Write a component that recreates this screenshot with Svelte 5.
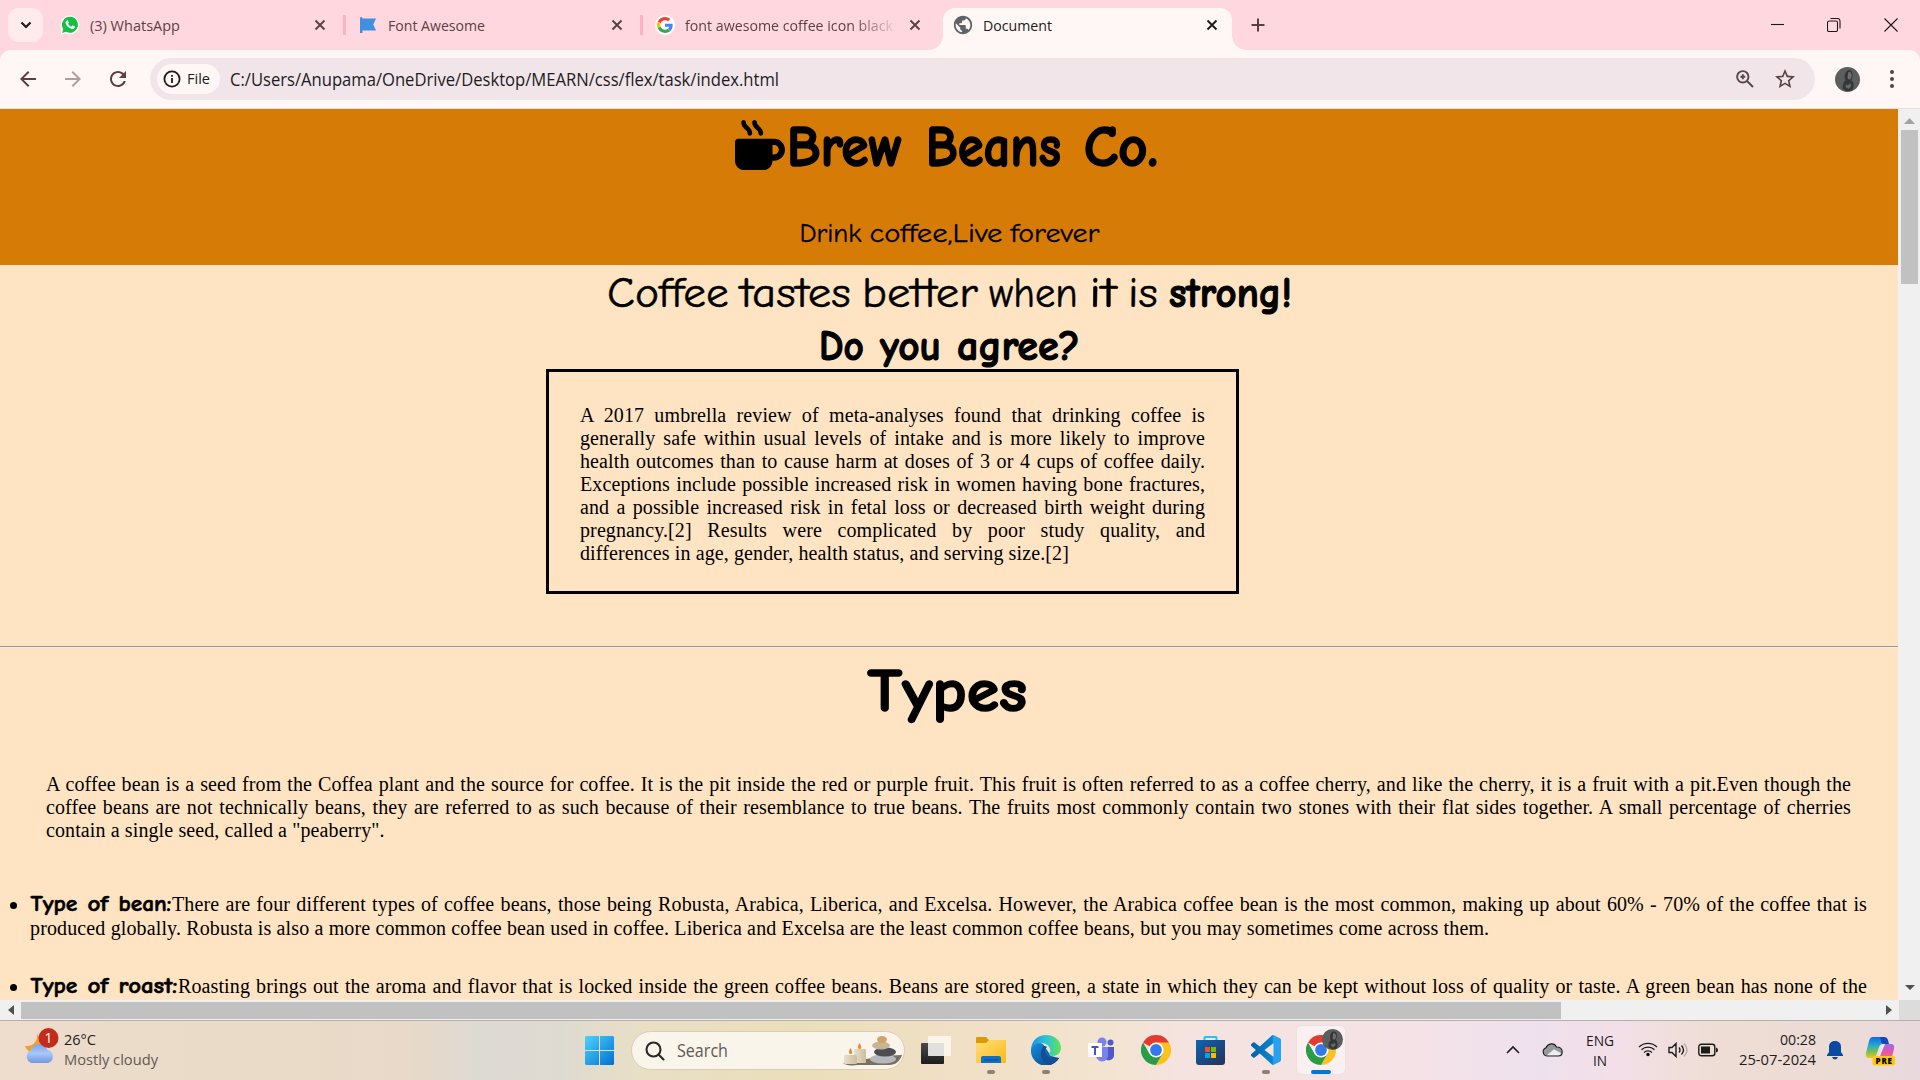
<script>
  const tabs = [
    { id: 'whatsapp', title: '(3) WhatsApp', width: 90 },
    { id: 'flag', title: 'Font Awesome', width: 97 },
    { id: 'google', title: 'font awesome coffee icon black', width: 208 },
    { id: 'globe', title: 'Document', width: 69 }
  ];
  const fact = [
    'A 2017 umbrella review of meta-analyses found that drinking coffee is',
    'generally safe within usual levels of intake and is more likely to improve',
    'health outcomes than to cause harm at doses of 3 or 4 cups of coffee daily.',
    'Exceptions include possible increased risk in women having bone fractures,',
    'and a possible increased risk in fetal loss or decreased birth weight during',
    'pregnancy.[2] Results were complicated by poor study quality, and',
    'differences in age, gender, health status, and serving size.[2]'
  ];
  const intro = [
    'A coffee bean is a seed from the Coffea plant and the source for coffee. It is the pit inside the red or purple fruit. This fruit is often referred to as a coffee cherry, and like the cherry, it is a fruit with a pit.Even though the',
    'coffee beans are not technically beans, they are referred to as such because of their resemblance to true beans. The fruits most commonly contain two stones with their flat sides together. A small percentage of cherries',
    'contain a single seed, called a "peaberry".'
  ];
</script>

{#snippet label(text, width, size, kind = '')}
  <svg class="label {kind}" {width} height={Math.round(size * 1.35)}>
    <text x="0" y={size} font-size={size} textLength={width} lengthAdjust="spacingAndGlyphs">{text}</text>
  </svg>
{/snippet}

{#snippet comic(text, width, size, bold = false)}
  <svg class="label comic" class:bold {width} height={Math.round(size * 1.35)}>
    <text x={-size * 0.025} y={size * 1.02} font-size={size * 1.07} stroke-width={size * (bold ? 0.028 : 0.012)} textLength={width + size * 0.045} lengthAdjust="spacingAndGlyphs">{text}</text>
  </svg>
{/snippet}

{#snippet cross()}
  <svg class="cross" width="16" height="16" viewBox="0 0 16 16"><path d="M3.500 3.500l9 9M12.500 3.500l-9 9" /></svg>
{/snippet}

{#snippet favicon(id)}
  {#if id === 'whatsapp'}
    <svg width="20" height="20" viewBox="0 0 20 20">
      <path d="M10 .6a9.300 9.300 0 1 1-4.300 17.600L.7 19.400l1.200-4.800A9.300 9.300 0 0 1 10 .6z" fill="#fff" />
      <path d="M10.100 1.800a8 8 0 1 1-4 15l-3.900 1.100 1-3.800a8 8 0 0 1 6.900-12.300z" fill="#12c143" />
      <path d="M7.200 5.400c.5-.1.8 0 1 .5l.6 1.500c.1.300 0 .5-.7 1.400.7 1.400 1.800 2.300 3.100 2.900l1-1.100c.2-.2.4-.2.7-.1l1.700.8c.4.2.3.9.1 1.400-.5 1-1.700 1.400-2.800 1.200-3.100-.8-5.600-3.100-6.300-5.600-.3-1.200.4-2.700 1.600-2.900z" fill="#fff" />
    </svg>
  {:else if id === 'flag'}
    <svg width="20" height="20" viewBox="0 0 20 20"><path d="M2.500 2c1.400 0 2 .7 2 1.500h13.500l-2.700 5.900 2.700 6.100H4.500V18h-2.500V3.500z" fill="#418fde" /></svg>
  {:else if id === 'google'}
    <svg width="20" height="20" viewBox="0 0 48 48">
      <circle cx="24" cy="24" r="24" fill="#fff" />
      <g transform="translate(4.800 4.800) scale(.8)">
        <path fill="#ea4335" d="M24 9.500c3.540 0 6.710 1.220 9.210 3.600l6.850-6.850C35.900 2.380 30.470 0 24 0 14.620 0 6.510 5.380 2.560 13.220l7.980 6.190C12.430 13.720 17.740 9.500 24 9.500z" />
        <path fill="#4285f4" d="M46.980 24.550c0-1.570-.15-3.090-.38-4.550H24v9.020h12.940c-.58 2.960-2.260 5.480-4.780 7.180l7.730 6c4.510-4.180 7.090-10.360 7.090-17.650z" />
        <path fill="#fbbc05" d="M10.530 28.590c-.48-1.450-.76-2.990-.76-4.590s.27-3.140.76-4.590l-7.980-6.190C.92 16.460 0 20.120 0 24c0 3.880.92 7.540 2.560 10.780l7.970-6.190z" />
        <path fill="#34a853" d="M24 48c6.480 0 11.930-2.130 15.890-5.810l-7.730-6c-2.150 1.450-4.920 2.300-8.160 2.300-6.260 0-11.570-4.220-13.470-9.910l-7.980 6.190C6.510 42.620 14.620 48 24 48z" />
      </g>
    </svg>
  {:else}
    <svg width="22" height="22" viewBox="0 0 24 24">
      <path fill="#5f6368" d="M12 2C6.480 2 2 6.480 2 12s4.480 10 10 10 10-4.480 10-10S17.520 2 12 2zm-1 17.930c-3.950-.49-7-3.850-7-7.930 0-.62.08-1.210.21-1.790L9 15v1c0 1.100.9 2 2 2v1.930zm6.900-2.540c-.26-.81-1-1.390-1.900-1.390h-1v-3c0-.55-.45-1-1-1H8v-2h2c.55 0 1-.45 1-1V7h2c1.100 0 2-.9 2-2v-.41c2.930 1.190 5 4.060 5 7.410 0 2.080-.8 3.970-2.100 5.390z" />
    </svg>
  {/if}
{/snippet}

{#snippet chrome()}
  <svg width="30" height="30" viewBox="0 0 30 30">
    <path d="M15 15L2 7.500A15 15 0 0 1 28 7.500z" fill="#e33b2e" />
    <path d="M28 7.500H15l6.500 11.200L15 30A15 15 0 0 0 28 7.500z" fill="#fcc31e" />
    <path d="M2 7.500A15 15 0 0 0 15 30l6.500-11.200L15 15 8.500 18.800z" fill="#2a9b47" />
    <circle cx="15" cy="15" r="7.500" fill="#fff" />
    <circle cx="15" cy="15" r="5.900" fill="#3479ea" />
  </svg>
{/snippet}

{#snippet avatar(size)}
  <svg class="avatar" width={size} height={size} viewBox="0 0 26 26">
    <circle cx="13" cy="13" r="13" fill="#5b5e5e" />
    <path d="M8 22c0-4 1-7 3-8-2-4-1-9 3-11 4 0 5 4 4 8l-1 3c3 2 3 6 1 10-3 2-8 1-10-2z" fill="#343636" />
    <path d="M14 5c3 0 4 3 3 6-1 3-4 2-4 0z" fill="#716d6b" />
    <path d="M11 18l2 1 3-2 1 3-3 3-3-2z" fill="#646767" />
  </svg>
{/snippet}

<div class="screen">
  <header class="tabstrip">
    <div class="tab-search"><svg width="14" height="14" viewBox="0 0 14 14"><path d="M2.500 4.500L7 9l4.500-4.500" /></svg></div>
    {#each tabs as tab}
      <div class="tab {tab.id}">
        <div class="fav">{@render favicon(tab.id)}</div>
        {@render label(tab.title, tab.width, 15)}
        {@render cross()}
      </div>
    {/each}
    <svg class="plus" width="18" height="18" viewBox="0 0 18 18"><path d="M9 2.500v13M2.500 9h13" /></svg>
    <div class="window-controls">
      <svg width="14" height="14" viewBox="0 0 14 14"><path d="M1 6.500h13" /></svg>
      <svg width="14" height="14" viewBox="0 0 14 14"><path d="M2.500 3h6.500q1.500 0 1.500 1.500V12q0 1.500-1.500 1.500H2Q.5 13.500.5 12V4.500Q.5 3 2.500 3zM3.500.5h7q2.500 0 2.500 2.500v7.500" /></svg>
      <svg width="14" height="14" viewBox="0 0 14 14"><path d="M.5.5l13 13M13.500.5l-13 13" /></svg>
    </div>
  </header>

  <div class="toolbar-back">
    <nav class="toolbar">
      <svg class="tool back" width="24" height="24" viewBox="0 0 24 24"><path d="M20 11H7.830l5.590-5.590L12 4l-8 8 8 8 1.410-1.410L7.830 13H20z" /></svg>
      <svg class="tool forward" width="24" height="24" viewBox="0 0 24 24"><path d="M4 11h12.170l-5.590-5.590L12 4l8 8-8 8-1.410-1.410L16.170 13H4z" /></svg>
      <svg class="tool reload" width="24" height="24" viewBox="0 0 24 24"><path d="M17.650 6.350C16.200 4.900 14.210 4 12 4c-4.420 0-7.990 3.580-7.990 8s3.570 8 7.990 8c3.730 0 6.840-2.550 7.730-6h-2.080c-.82 2.330-3.040 4-5.650 4-3.310 0-6-2.690-6-6s2.690-6 6-6c1.660 0 3.140.69 4.220 1.780L13 11h7V4z" /></svg>
      <div class="omnibox">
        <div class="chip">
          <svg width="18" height="18" viewBox="0 0 18 18"><circle cx="9" cy="9" r="7.600" fill="none" stroke="#201a1b" stroke-width="1.800" /><path d="M8.100 8h1.800v5H8.100zM8.100 5h1.800v1.800H8.100z" fill="#201a1b" /></svg>
          {@render label('File', 23, 15, 'dark')}
        </div>
        {@render label('C:/Users/Anupama/OneDrive/Desktop/MEARN/css/flex/task/index.html', 549, 17.5, 'dark url')}
        <svg class="zoom" width="20" height="20" viewBox="0 0 20 20"><circle cx="7.800" cy="7.800" r="5.700" /><path d="M12 12l6 6M7.800 5.300v5M5.300 7.800h5" /></svg>
        <svg class="tool star" width="24" height="24" viewBox="0 0 24 24"><path d="M22 9.240l-7.190-.62L12 2 9.190 8.630 2 9.240l5.460 4.730L5.820 21 12 17.270 18.180 21l-1.630-7.030L22 9.240zM12 15.400l-3.760 2.270 1-4.280-3.320-2.880 4.380-.38L12 6.100l1.710 4.040 4.380.38-3.320 2.880 1 4.280L12 15.400z" /></svg>
      </div>
      {@render avatar(25)}
      <svg class="dots" width="6" height="20" viewBox="0 0 6 20"><circle cx="3" cy="3" r="2" /><circle cx="3" cy="10" r="2" /><circle cx="3" cy="17" r="2" /></svg>
    </nav>
  </div>

  <div class="viewport">
    <main>
      <section class="hero">
        <div class="brand">
          <svg class="mug" width="50" height="50" viewBox="0 0 512 512"><path d="M88 0C74.700 0 64 10.700 64 24c0 38.900 23.400 59.400 39.100 73.100l1.100 1C120.500 112.300 128 119.900 128 136c0 13.300 10.700 24 24 24s24-10.700 24-24c0-38.900-23.400-59.400-39.100-73.100l-1.100-1C119.500 47.700 112 40.100 112 24c0-13.300-10.700-24-24-24zM32 192c-17.700 0-32 14.300-32 32V416c0 53 43 96 96 96H288c53 0 96-43 96-96h16c61.900 0 112-50.100 112-112s-50.100-112-112-112H352 32zm352 64h16c26.500 0 48 21.500 48 48s-21.500 48-48 48H384V256zM224 24c0-13.300-10.700-24-24-24s-24 10.700-24 24c0 38.900 23.400 59.400 39.100 73.100l1.100 1C232.500 112.300 240 119.900 240 136c0 13.300 10.700 24 24 24s24-10.700 24-24c0-38.900-23.400-59.400-39.100-73.100l-1.100-1C231.500 47.700 224 40.100 224 24z" /></svg>
          {@render comic('Brew', 114, 54, true)}
          {@render comic('Beans', 133, 54, true)}
          {@render comic('Co.', 72, 54, true)}
        </div>
        <div class="tagline">
          {@render comic('Drink', 61, 25)}
          {@render comic('coffee,Live', 132, 25)}
          {@render comic('forever', 88, 25)}
        </div>
      </section>

      <div class="slogan">
        {@render comic('Coffee', 120, 40)}
        {@render comic('tastes', 109, 40)}
        {@render comic('better', 114, 40)}
        {@render comic('when', 87, 40)}
        {@render comic('it', 26, 40)}
        {@render comic('is', 28, 40)}
        {@render comic('strong!', 121, 40, true)}
      </div>
      <div class="question">
        {@render comic('Do', 43, 40, true)}
        {@render comic('you', 59, 40, true)}
        {@render comic('agree?', 121, 40, true)}
      </div>

      <div class="fact">
        {#each fact as line}<p class="line">{line}</p>{/each}
      </div>
      <div class="rule"></div>
      <div class="types">{@render comic('Types', 157, 57, true)}</div>
      <div class="intro">
        {#each intro as line}<p class="line">{line}</p>{/each}
      </div>

      <ul>
        <li>
          <div class="lead">
            <i></i>
            <div class="term">{@render comic('Type', 46, 21, true)}{@render comic('of', 20, 21, true)}{@render comic('bean:', 52, 21, true)}</div>
            <p class="line">There are four different types of coffee beans, those being Robusta, Arabica, Liberica, and Excelsa. However, the Arabica coffee bean is the most common, making up about 60% - 70% of the coffee that is</p>
          </div>
          <p class="line last">produced globally. Robusta is also a more common coffee bean used in coffee. Liberica and Excelsa are the least common coffee beans, but you may sometimes come across them.</p>
        </li>
        <li>
          <div class="lead">
            <i></i>
            <div class="term">{@render comic('Type', 46, 21, true)}{@render comic('of', 20, 21, true)}{@render comic('roast:', 58, 21, true)}</div>
            <p class="line">Roasting brings out the aroma and flavor that is locked inside the green coffee beans. Beans are stored green, a state in which they can be kept without loss of quality or taste. A green bean has none of the</p>
          </div>
        </li>
      </ul>
    </main>
    <div class="vbar">
      <svg width="11" height="6" viewBox="0 0 11 6"><path d="M5.500 0L11 6H0z" fill="#a3a3a3" /></svg>
      <div class="vthumb"></div>
      <svg width="10" height="5" viewBox="0 0 10 5"><path d="M0 0h10L5 5z" fill="#505050" /></svg>
    </div>
  </div>
  <div class="hbar">
    <svg width="6" height="10" viewBox="0 0 6 10"><path d="M6 0v10L0 5z" /></svg>
    <div class="hthumb"></div>
    <svg width="6" height="10" viewBox="0 0 6 10"><path d="M0 0v10l6-5z" /></svg>
    <div class="corner"></div>
  </div>

  <footer>
    <svg class="weather" width="36" height="36" viewBox="0 0 36 36">
      <defs>
        <linearGradient id="cloud" x2="0" y2="1"><stop stop-color="#7da2e6" /><stop offset=".5" stop-color="#a9c8f8" /><stop offset="1" stop-color="#6f98e0" /></linearGradient>
      </defs>
      <path d="M13 4c1 7-4 13-12 12 2 6 8 8 14 6l5-9z" fill="#f0a02c" />
      <path d="M7.500 33a7 7 0 0 1-.5-13c1-4 5-6.500 9-6 4 .3 6.500 3 7.500 6a6.700 6.700 0 0 1 .5 13z" fill="url(#cloud)" />
      <circle cx="24.500" cy="8" r="10" fill="#c42b1c" />
      <text class="ui" x="20.500" y="13" font-size="14" fill="#fff">1</text>
    </svg>
    <div class="forecast">
      {@render label('26°C', 32, 15, 'dark')}
      {@render label('Mostly cloudy', 94, 15, 'muted')}
    </div>

    <svg class="windows" width="29" height="29" viewBox="0 0 29 29">
      <defs><linearGradient id="win" gradientUnits="userSpaceOnUse" x1="0" y1="0" x2="29" y2="29"><stop stop-color="#4fd2fb" /><stop offset="1" stop-color="#0070d2" /></linearGradient></defs>
      <path d="M1 0h13v14H0V1zM15 0h13l1 1v13H15zM0 15h14v14H1l-1-1zM15 15h14v13l-1 1H15z" fill="url(#win)" />
    </svg>

    <div class="search">
      <svg class="lens" width="20" height="20" viewBox="0 0 20 20"><circle cx="8.500" cy="8.500" r="7" /><path d="M13.500 13.500l5 5" /></svg>
      {@render label('Search', 51, 17.5, 'muted')}
      <svg class="spa" width="60" height="32" viewBox="0 0 60 32">
        <defs><linearGradient id="wax"><stop stop-color="#e9e0cb" /><stop offset="1" stop-color="#cbbf9f" /></linearGradient></defs>
        <path d="M0 28c16-4 30-4 36-7l23-1c-2 6-6 10-13 10H15C7 31 2 30 0 28z" fill="#77715e" />
        <rect x="11" y="14" width="12" height="14" rx="1" fill="url(#wax)" />
        <rect x="1" y="20" width="13" height="9" rx="1" fill="url(#wax)" />
        <path d="M16.500 8c2.500 4 2 6 0 6s-2-3 0-6zM7.500 13c2.500 4 2 6 0 6s-2-3 0-6z" fill="#ee8535" />
        <ellipse cx="40" cy="24" rx="13" ry="4.500" fill="#b7b8bd" />
        <ellipse cx="42" cy="17" rx="11" ry="4.500" fill="#4c4d53" />
        <ellipse cx="38" cy="10.500" rx="9" ry="4" fill="#c6b594" />
        <ellipse cx="39" cy="4.500" rx="5" ry="3.500" fill="#d5a168" />
      </svg>
    </div>

    <div class="apps">
      <div class="app">
        <svg width="30" height="30" viewBox="0 0 30 30">
          <defs><linearGradient id="tv" x2="0" y2="1"><stop stop-color="#4a4a4a" /><stop offset="1" stop-color="#1d1d1d" /></linearGradient></defs>
          <rect y="8" width="23" height="21" rx="1" fill="url(#tv)" /><path d="M7 8h16v13H7z" fill="#a6a6a4" /><rect x="7" y="1" width="23" height="20" rx="1" fill="#fff" fill-opacity=".65" />
        </svg>
      </div>
      <div class="app run">
        <svg width="30" height="30" viewBox="0 0 30 30">
          <defs><linearGradient id="fold" x2="1" y2="1"><stop stop-color="#ffe07a" /><stop offset="1" stop-color="#fdb813" /></linearGradient></defs>
          <path d="M0 3q0-1 1-1h9l3 3h16q1 0 1 1v4H0z" fill="#dc9b06" /><path d="M0 8h10l3-3h17v22q0 1-1 1H1q-1 0-1-1z" fill="url(#fold)" />
          <path d="M5 28v-5q0-2 2-2h16q2 0 2 2v5z" fill="#0f70c5" /><path d="M8 25h14" stroke="#0a4b8b" />
        </svg>
      </div>
      <div class="app run">
        <svg width="30" height="30" viewBox="0 0 30 30">
          <defs>
            <linearGradient id="e1"><stop stop-color="#1f8fe0" /><stop offset=".5" stop-color="#2bc4d8" /><stop offset="1" stop-color="#63e34f" /></linearGradient>
            <linearGradient id="e2" x2="1" y2="1"><stop stop-color="#1690df" /><stop offset="1" stop-color="#0b3f83" /></linearGradient>
          </defs>
          <path d="M0 14C2 8 8 7 12 9l8 12 8 2A15 15 0 0 1 0 14z" fill="url(#e2)" />
          <path d="M0 14C1 5 7 0 15 0c9 0 15 6 15 13 0 5-4 8-8 8-3 0-4-1-4-2s2-2 1-5c-1-4-5-6-9-6-5 0-9 3-10 6z" fill="url(#e1)" />
          <path d="M13 11c-6 6-3 17 6 18.500 4-1 7-3 9.500-7C22 26 14 22 14 16c0-2 1-3 2-4-1-1-2-1-3-1z" fill="#124f98" />
        </svg>
      </div>
      <div class="app">
        <svg width="30" height="30" viewBox="0 0 30 30">
          <circle cx="16" cy="7" r="4.500" fill="#7b83eb" /><circle cx="24.500" cy="7.500" r="3" fill="#5059c9" />
          <path d="M19 12h9v9a5.500 5.500 0 0 1-9 3z" fill="#5059c9" /><path d="M10 12h12v8a6 6 0 0 1-12 1z" fill="#7b83eb" />
          <rect x="2" y="8" width="14" height="14" fill="#fff" /><path d="M5.500 11h7v2H10v7H8v-7H5.500z" fill="#4b53bc" />
        </svg>
      </div>
      <div class="app">{@render chrome()}</div>
      <div class="app">
        <svg width="30" height="30" viewBox="0 0 30 30">
          <defs><linearGradient id="store" x2="1" y2="1"><stop stop-color="#0b66b4" /><stop offset="1" stop-color="#273154" /></linearGradient></defs>
          <path d="M8.500 6V2.500Q8.500 2 9 2h11q.5 0 .5.500V6" fill="none" stroke="#23c4f3" stroke-width="2" />
          <path d="M0 5h29v22q0 3-3 3H3q-3 0-3-3z" fill="url(#store)" />
          <path d="M9 12h5v5H9z" fill="#f25022" /><path d="M15 12h5v5h-5z" fill="#7fba00" /><path d="M9 18h5v5H9z" fill="#00a4ef" /><path d="M15 18h5v5h-5z" fill="#ffb900" />
        </svg>
      </div>
      <div class="app run">
        <svg width="30" height="30" viewBox="0 0 24 24">
          <defs><linearGradient id="vs"><stop stop-color="#0065a9" /><stop offset=".7" stop-color="#0b83ce" /><stop offset=".76" stop-color="#26a2f0" /></linearGradient></defs>
          <path fill="url(#vs)" d="M23.150 2.587L18.210.21a1.494 1.494 0 0 0-1.705.29l-9.460 8.630-4.120-3.128a.999.999 0 0 0-1.276.057L.327 7.261A1 1 0 0 0 .326 8.740L3.899 12 .326 15.260a1 1 0 0 0 .001 1.479L1.650 17.940a.999.999 0 0 0 1.276.057l4.120-3.128 9.460 8.630a1.492 1.492 0 0 0 1.704.29l4.942-2.377A1.500 1.500 0 0 0 24 20.060V3.939a1.500 1.500 0 0 0-.85-1.352zm-5.146 14.861L10.826 12l7.178-5.448v10.896z" />
        </svg>
      </div>
      <div class="app active">
        {@render chrome()}
        <div class="badge">{@render avatar(21)}</div>
      </div>
    </div>

    <svg class="chev" width="14" height="9" viewBox="0 0 14 9"><path d="M1 8l6-6 6 6" /></svg>
    <svg class="onedrive" width="21" height="15" viewBox="0 0 21 15">
      <path d="M5 14a4.300 4.300 0 0 1-1-8.300C6 1.500 12 0 14.500 5c4 0 5.700 2.500 5.700 5s-1.700 4-4 4z" fill="#999" stroke="#222" stroke-width="1.200" />
      <path d="M5 13.200l7-6 7 4c0 1-1 2-3 2z" fill="#eee" />
    </svg>
    <div class="lang">{@render label('ENG', 28, 14.5, 'dark')}{@render label('IN', 14, 14.5, 'dark')}</div>
    <svg class="wifi" width="20" height="16" viewBox="0 0 20 16"><path d="M1 6a13 13 0 0 1 18 0M3.500 8.800a9.300 9.300 0 0 1 13 0M6 11.500a5.700 5.700 0 0 1 8 0" /><circle cx="10" cy="13.500" r="1.700" /></svg>
    <svg class="sound" width="21" height="16" viewBox="0 0 21 16"><path d="M1 5.500h3l4-4v13l-4-4H1zM11 5.500q2 2.500 0 5M13.500 3.500q4 4.500 0 9" /><path class="faint" d="M16 1.500q6 6.500 0 13" /></svg>
    <svg class="battery" width="21" height="14" viewBox="0 0 21 14"><rect x=".8" y="1.300" width="16" height="11.500" rx="2.500" fill="none" stroke="#1c1c1c" stroke-width="1.400" /><path d="M3 3.500h9v7H3zM18 4.500q2 .5 2 2.500t-2 2.500z" fill="#1c1c1c" /></svg>
    <div class="clock">{@render label('00:28', 36, 15, 'dark')}{@render label('25-07-2024', 77, 15, 'dark')}</div>
    <svg class="bell" width="16" height="20" viewBox="0 0 16 20"><path d="M8 1c4 0 6 2.500 6 6v5l2 3v1H0v-1l2-3V7c0-3.500 2-6 6-6zM5 17h6q-1 2.500-3 2.500T5 17z" fill="#0b4aa2" /></svg>
    <svg class="copilot" width="31" height="31" viewBox="0 0 31 31">
      <defs>
        <linearGradient id="c1" x2="0" y2="1"><stop stop-color="#1469e0" /><stop offset=".4" stop-color="#24a9d5" /><stop offset=".7" stop-color="#7abf48" /><stop offset="1" stop-color="#edc52b" /></linearGradient>
        <linearGradient id="c2" x2="0" y2="1"><stop stop-color="#9b6bf0" /><stop offset=".5" stop-color="#e755a8" /><stop offset="1" stop-color="#f7834a" /></linearGradient>
      </defs>
      <path d="M8 1h10q3 0 4 3l1 4h-5q-3 0-4 3l-3 9q-1 2-4 2H4q-4 0-3-5L4 5q1-4 4-4z" fill="url(#c1)" />
      <path d="M15 1h4q3 0 4 3l1 4h-5q-3 0-3-3z" fill="#1647b8" />
      <path d="M18 8h8q4 0 3 5l-2 8q-1 3-4 3H11q3-1 4-4l2-7z" fill="url(#c2)" />
      <path d="M18 8h2l-5 12q-1 2-4 2 2-1 3-4l2-7q.5-2 2-3z" fill="#f4e9ee" />
      <rect x="7.500" y="20" width="22.500" height="9.500" rx="2" fill="#ffc80a" />
      <text class="ui pre" x="10.500" y="27.700" font-size="8" textLength="16.500">PRE</text>
    </svg>
  </footer>
</div>

<style>
  :global(body) { margin: 0; overflow: hidden; }
  svg { display: block; flex: none; }
  p, ul { margin: 0; padding: 0; }
  .screen { width: 1920px; height: 1080px; display: flex; flex-direction: column; overflow: hidden; background: #ffe4c4; }
  .label { overflow: visible; font-family: 'Segoe UI', 'Open Sans', 'Noto Sans', sans-serif; fill: #5c3f43; }
  .label.dark { fill: #211c1d; }
  .label.muted { fill: #5f5a54; }
  .label.comic { font-family: 'Comic Sans MS', 'Comic Neue', 'Open Sans', sans-serif; fill: #000; stroke: #000; }
  .label.comic text { font-variant-ligatures: none; font-feature-settings: 'liga' 0, 'clig' 0, 'dlig' 0, 'calt' 0; }
  .label.bold { font-weight: 700; }
  .ui { font-family: 'Segoe UI', 'Open Sans', sans-serif; }

  .tabstrip { height: 50px; flex: none; display: flex; background: #ffd8df; }
  .tab-search { width: 35px; height: 34px; margin: 8px 17px 0 8px; border-radius: 11px; background: #ffebee; display: flex; align-items: center; justify-content: center; }
  .tab-search path { fill: none; stroke: #201a1b; stroke-width: 2.2; }
  .tab { box-sizing: border-box; height: 42px; margin-top: 8px; padding-bottom: 8px; display: flex; align-items: center; }
  .fav { width: 20px; margin-right: 10px; display: flex; justify-content: center; flex: none; }
  .tab .label { margin-top: 2px; }
  .tab .cross { margin-left: auto; }
  .cross path { fill: none; stroke: #5c3f43; stroke-width: 1.9; }
  .whatsapp { width: 283px; padding-right: 15px; }
  .flag, .google { background: linear-gradient(#ffb1c3, #ffb1c3) 0 7px / 3px 20px no-repeat; padding-left: 15px; }
  .flag { width: 297px; padding-right: 15px; }
  .google { width: 303px; padding-right: 20px; }
  .google .label { -webkit-mask-image: linear-gradient(90deg, #000 80%, transparent 103%); mask-image: linear-gradient(90deg, #000 80%, transparent 103%); }
  .globe { position: relative; width: 289px; padding: 0 12px 8px 10px; background: #fff7f5; border-radius: 12px 12px 0 0; }
  .globe::before, .globe::after { content: ''; position: absolute; bottom: 0; width: 14px; height: 14px; }
  .globe::before { left: -14px; background: radial-gradient(circle at 0 0, transparent 13.5px, #fff7f5 14px); }
  .globe::after { right: -14px; background: radial-gradient(circle at 100% 0, transparent 13.5px, #fff7f5 14px); }
  .globe .label { fill: #201a1b; }
  .globe .cross path { stroke: #201a1b; }
  .plus { margin: 16px 0 0 17px; }
  .plus path { stroke: #5c3f43; stroke-width: 2; }
  .window-controls { margin: 18px 22px 0 auto; display: flex; gap: 43px; }
  .window-controls path { fill: none; stroke: #1c1718; stroke-width: 1.1; }

  .toolbar-back { height: 59px; flex: none; background: #ffd8df; }
  .toolbar { box-sizing: border-box; height: 59px; border-bottom: 1px solid #eadde3; background: #fff7f5; border-radius: 11px 11px 0 0; display: flex; align-items: center; }
  .tool path, .dots circle { fill: #5c3f43; }
  .back { margin-left: 16px; }
  .forward { margin-left: 21px; opacity: .48; }
  .reload { margin-left: 21px; }
  .omnibox { width: 1665px; height: 42px; margin-left: 20px; border-radius: 21px; background: #f1e5ea; display: flex; align-items: center; }
  .chip { width: 57px; height: 30px; margin-left: 7px; padding-left: 6px; border-radius: 15px; background: #fff7f5; display: flex; align-items: center; gap: 6px; }
  .url { margin: 2px 0 0 10px; }
  .zoom { margin-left: 956px; }
  .zoom circle, .zoom path { fill: none; stroke: #5c4548; stroke-width: 1.9; }
  .star { margin-left: 18px; }
  .avatar { margin-left: 20px; }
  .dots { margin-left: 29px; }

  .viewport { height: 891px; flex: none; display: flex; background: #f0f0f0; }
  main { width: 1898px; height: 891px; overflow: hidden; background: #ffe4c4; }
  .hero { box-sizing: border-box; height: 156px; padding-top: 2px; background: #d67b06; }
  .brand { height: 105px; padding-left: 735px; display: flex; gap: 25px; }
  .mug { margin: 9px -22px 0 0; }
  .tagline { padding-left: 800px; display: flex; gap: 9px; }
  .slogan { box-sizing: border-box; height: 54px; padding: 1px 0 0 608px; display: flex; gap: 13px; }
  .question { height: 50px; padding-left: 820px; display: flex; gap: 18px; }
  .fact { box-sizing: border-box; width: 693px; height: 225px; margin-left: 546px; padding: 32px 31px 0 31px; border: 3px solid #000; }
  .line { height: 23px; font: 20px/23px 'Times New Roman', 'Liberation Serif', serif; letter-spacing: .11px; color: #000; text-align: justify; text-align-last: justify; }
  .fact .line:last-child, .intro .line:last-child, .last { text-align-last: left; }
  .last { letter-spacing: .135px; }
  .rule { height: 1px; margin: 52px 0 5px; background: #979797; border-bottom: 1px solid #eee; }
  .types { height: 120px; padding-left: 869px; }
  .intro { margin: 0 47px 51px 46px; }
  li { list-style: none; height: 82px; padding: 0 31px 0 30px; }
  .lead { display: flex; height: 24px; }
  .lead i { width: 7px; height: 7px; margin: 9px 14px 0 -20px; border-radius: 50%; background: #000; flex: none; }
  .lead .line { flex: 1; }
  .term { display: flex; gap: 11px; margin-top: -3px; padding-right: 1px; }

  .vbar { width: 21px; margin-left: 1px; display: flex; flex-direction: column; align-items: center; padding-top: 9px; box-sizing: border-box; }
  .vthumb { width: 17px; height: 154px; margin: 6px 0 701px; background: #c1c1c1; }
  .hbar { height: 20px; flex: none; background: #f0f0f0; display: flex; align-items: center; }
  .hbar path { fill: #505050; }
  .hbar svg:first-child { margin: 0 7px 0 8px; }
  .hthumb { width: 1540px; height: 17px; margin-right: 325px; background: #c1c1c1; }
  .corner { width: 21px; height: 20px; margin-left: auto; background: #dcdcdc; }

  footer { box-sizing: border-box; height: 60px; border-top: 1px solid #b9afa9; display: flex; align-items: flex-start; background: linear-gradient(90deg, #eedccc 0, #e9dbc7 260px, #e8d9c9 410px, #dddad4 480px, #dfdad1 560px, #e8dfc6 640px, #ebdfba 800px, #f0dfc4 940px, #f3e4d1 1110px, #f5e3df 1180px, #f5e2e6 1400px, #eee1ee 1540px, #f3dfe7 1620px, #eeddd4 1720px, #ecdcd6 1840px, #e9d9df 1920px); }
  .weather { margin: 9px 0 0 24px; overflow: visible; }
  .forecast { margin: 9px 0 0 4px; width: 94px; }
  .windows { margin: 15px 0 0 427px; }
  .search { box-sizing: border-box; width: 274px; height: 39px; margin: 10px 0 0 17px; padding: 0 1px 0 13px; border: 1px solid #dcccb4; border-radius: 20px; background: #f9f5ea; display: flex; align-items: center; }
  .lens { margin-right: 12px; }
  .lens circle, .lens path { fill: none; stroke: #2b2825; stroke-width: 2.1; stroke-linecap: round; }
  .spa { margin-left: auto; }
  .apps { display: flex; gap: 7px; margin: 5px 0 0 7px; }
  .app { position: relative; box-sizing: border-box; width: 48px; height: 48px; padding: 9px; }
  .run::after, .active::after { content: ''; position: absolute; bottom: 0; left: 20px; width: 8px; height: 4px; border-radius: 2px; background: #8a8178; }
  .active { background: #faf0f1; border-radius: 5px; box-shadow: 0 0 0 1px #eedfe1; }
  .active::after { left: 14px; width: 20px; background: #0078d4; }
  .badge { position: absolute; left: 25px; top: 3px; }
  .badge .avatar { margin: 0; }
  .chev { margin: 24px 0 0 161px; }
  .chev path { fill: none; stroke: #1c1c1c; stroke-width: 1.6; }
  .onedrive { margin: 21px 0 0 22px; }
  .lang { width: 28px; margin: 10px 0 0 23px; display: flex; flex-direction: column; align-items: center; }
  .wifi { margin: 20px 0 0 24px; }
  .wifi path, .sound path { fill: none; stroke: #1c1c1c; stroke-width: 1.4; }
  .sound { margin: 21px 0 0 10px; }
  .sound .faint { stroke: #b5aca9; }
  .battery { margin: 22px 0 0 9px; }
  .clock { width: 77px; margin: 9px 0 0 20px; display: flex; flex-direction: column; align-items: flex-end; }
  .bell { margin: 19px 0 0 11px; }
  .copilot { margin: 15px 0 0 22px; }
  .pre { font-weight: 800; }
</style>
